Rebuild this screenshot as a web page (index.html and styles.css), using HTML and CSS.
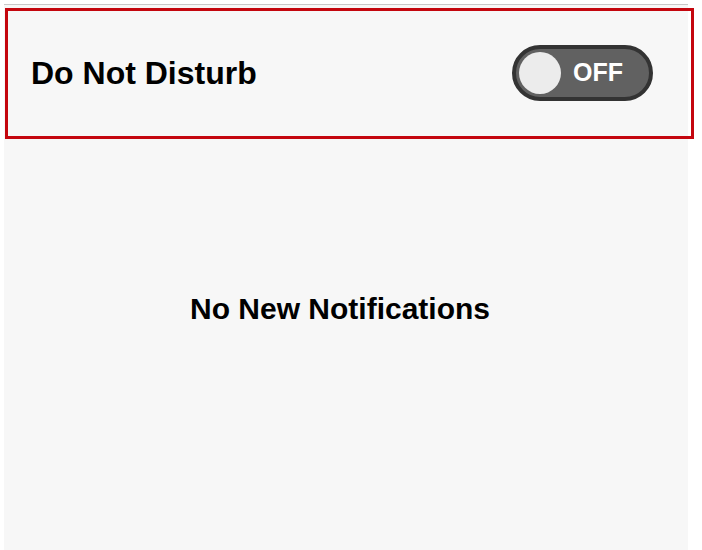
FILE: index.html
```html
<!DOCTYPE html>
<html lang="en">
<head>
    <meta charset="UTF-8">
    <meta name="viewport" content="width=device-width, initial-scale=1.0">
    <title>Notifications</title>
    <link rel="stylesheet" href="styles.css">
</head>
<body>
    <div class="panel">
        <div class="dnd-row">
            <span class="dnd-label">Do Not Disturb</span>
            <button class="toggle" id="dndToggle" onclick="toggleDnd()">
                <span class="knob"></span>
                <span class="toggle-text" id="toggleText">OFF</span>
            </button>
        </div>

        <div class="empty">
            <p>No New Notifications</p>
        </div>
    </div>

    <script>
        let dndOn = false;

        function toggleDnd() {
            dndOn = !dndOn;
            document.getElementById('dndToggle').classList.toggle('on', dndOn);
            document.getElementById('toggleText').textContent = dndOn ? 'ON' : 'OFF';
        }
    </script>
</body>
</html>
```

FILE: styles.css
```css
* {
    margin: 0;
    padding: 0;
    box-sizing: border-box;
}

body {
    font-family: 'Liberation Sans', Arial, sans-serif;
    background: #fff;
    color: #000;
}

.panel {
    margin: 4px 0 0 4px;
    width: 684px;
    height: 546px;
    background: #f7f7f7;
    border-top: 1px solid #c8c8c8;
}

.dnd-row {
    margin: 3px -6px 0 1px;
    height: 131px;
    border: 3px solid #c4060e;
    display: flex;
    align-items: center;
    justify-content: space-between;
    padding: 0 38px 0 23px;
}

.dnd-label {
    font-size: 32px;
    font-weight: bold;
}

.toggle {
    width: 141px;
    height: 56px;
    margin-top: -2px;
    border: 4px solid #333;
    border-radius: 28px;
    background: #616161;
    display: flex;
    align-items: center;
    padding: 0 0 0 3px;
    cursor: pointer;
    font-family: inherit;
}

.knob {
    width: 42px;
    height: 42px;
    border-radius: 50%;
    background: #ececec;
}

.toggle-text {
    margin-left: 12px;
    color: #fff;
    font-size: 25px;
    font-weight: bold;
}

.toggle.on {
    background: #2e7d32;
    flex-direction: row-reverse;
    padding: 0 3px 0 0;
}

.toggle.on .toggle-text {
    margin: 0 12px 0 0;
}

.empty {
    padding: 153px 12px 0 0;
    text-align: center;
}

.empty p {
    font-size: 30px;
    font-weight: bold;
    line-height: 34px;
}
```
